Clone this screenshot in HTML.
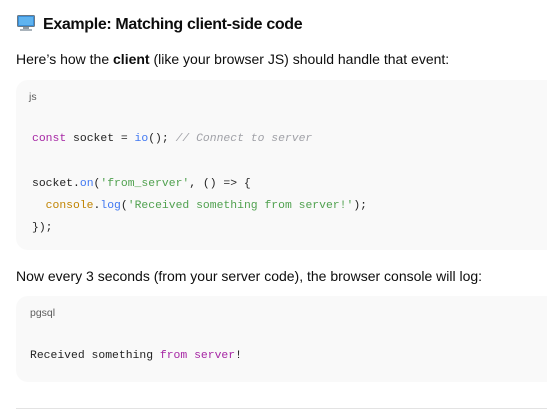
<!DOCTYPE html>
<html><head><meta charset="utf-8"><style>
body{margin:0;background:#fff;font-family:"Liberation Sans",sans-serif;color:#0d0d0d;width:547px;height:413px;overflow:hidden;position:relative}
.a{position:absolute;white-space:pre}
h3{position:absolute;left:17px;top:15px;margin:0;font-size:16px;letter-spacing:-0.35px;font-weight:bold;white-space:nowrap}
.p{font-size:14px}
.blk{position:absolute;left:16px;width:560px;background:#f9f9f9;border-radius:12px}
.lang{font-size:10.5px;color:#5d5d5d}
.m{font-family:"Liberation Mono",monospace;font-size:11.4px;color:#1f1f1f}
.k{color:#a626a4}.f{color:#4078f2}.c{color:#a0a1a7;font-style:italic}.s{color:#50a14f}.y{color:#c18401}
</style></head><body>
<h3><svg width="18" height="16" viewBox="0 0 18 16" style="vertical-align:-2px;margin-right:8px"><rect x="0.5" y="0.5" width="17" height="11" rx="1" fill="#3a8fd9" stroke="#6b7a86"/><rect x="2" y="2" width="14" height="8" fill="#5fb3ef"/><rect x="6" y="12" width="6" height="2" fill="#8d99a3"/><rect x="3" y="14" width="12" height="2" fill="#a9b3bb"/></svg>Example: Matching client-side code</h3>
<div class="a p" style="left:16px;top:51px">Here’s how the <b>client</b> (like your browser JS) should handle that event:</div>
<div class="blk" style="top:80px;height:170px"></div>
<div class="a lang" style="left:29px;top:91px">js</div>
<div class="a m" style="left:32px;top:133px"><span class="k">const</span> socket = <span class="f">io</span>(); <span class="c">// Connect to server</span></div>
<div class="a m" style="left:32px;top:178px">socket.<span class="f">on</span>(<span class="s">'from_server'</span>, () =&gt; {</div>
<div class="a m" style="left:32px;top:200px">  <span class="y">console</span>.<span class="f">log</span>(<span class="s">'Received something from server!'</span>);</div>
<div class="a m" style="left:32px;top:222px">});</div>
<div class="a p" style="left:16px;top:268px">Now every 3 seconds (from your server code), the browser console will log:</div>
<div class="blk" style="top:296px;height:86px"></div>
<div class="a lang" style="left:30px;top:307px">pgsql</div>
<div class="a m" style="left:30px;top:350px">Received something <span class="k">from</span> <span class="k">server</span>!</div>
<div style="position:absolute;left:16px;top:408px;width:531px;height:1px;background:#e3e3e3"></div>
</body></html>
